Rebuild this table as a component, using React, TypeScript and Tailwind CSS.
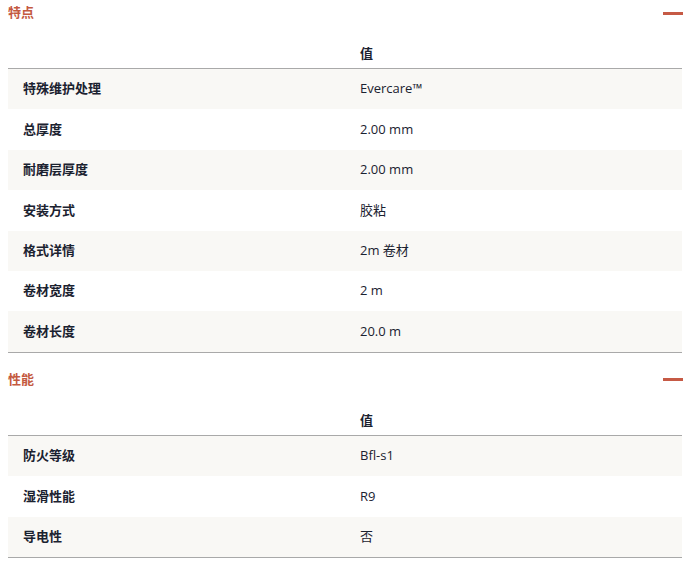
const sections = [
  {
    title: "特点",
    rows: [
      ["特殊维护处理", "Evercare™"],
      ["总厚度", "2.00 mm"],
      ["耐磨层厚度", "2.00 mm"],
      ["安装方式", "胶粘"],
      ["格式详情", "2m 卷材"],
      ["卷材宽度", "2 m"],
      ["卷材长度", "20.0 m"],
    ],
  },
  {
    title: "性能",
    rows: [
      ["防火等级", "Bfl-s1"],
      ["湿滑性能", "R9"],
      ["导电性", "否"],
    ],
  },
];

const font = "font-['Open_Sans','Noto_Sans_CJK_SC',sans-serif]";

export default function App() {
  return (
    <div className={`w-[674px] ml-2 bg-white text-[13px] text-[#1b2230] ${font}`}>
      {sections.map((section, s) => (
        <section key={s} className={s > 0 ? "mt-[14px]" : ""}>
          {/* Section heading with collapse bar */}
          <div className="flex h-[26px] items-center justify-between">
            <h2 className="text-[13px] font-semibold text-[#c4593f]">{section.title}</h2>
            <span className="mr-[-1px] h-[3px] w-[20px] bg-[#c65a45]" />
          </div>

          <div className="grid grid-cols-2 border-b border-[#a9a9a9]">
            <div className="pt-[18px] pb-[5px] leading-[19px]" />
            <div className="pl-[15px] pt-[18px] pb-[5px] font-bold leading-[19px]">值</div>
          </div>

          <div className="border-b border-[#a9a9a9]">
            {section.rows.map(([label, value], i) => (
              <div
                key={i}
                className={`grid h-[40.4px] grid-cols-2 items-center ${i % 2 === 0 ? "bg-[#f9f8f5]" : "bg-white"}`}
              >
                <div className="pl-[15px] font-bold">{label}</div>
                <div className="pl-[15px]">{value}</div>
              </div>
            ))}
          </div>
        </section>
      ))}
    </div>
  );
}
